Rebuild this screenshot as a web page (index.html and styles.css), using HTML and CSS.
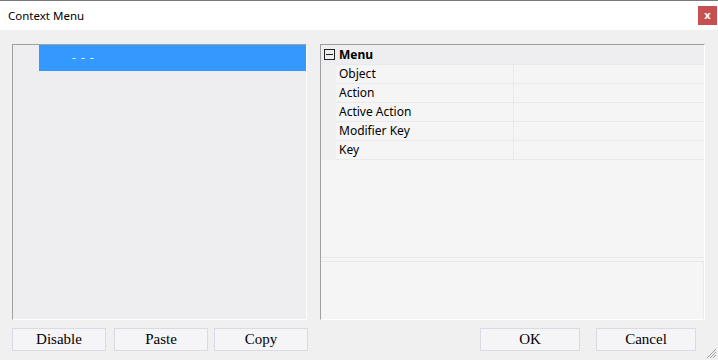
FILE: index.html
```html
<!DOCTYPE html>
<html lang="en">
<head>
  <meta charset="UTF-8">
  <meta name="viewport" content="width=device-width, initial-scale=1.0">
  <title>Context Menu</title>
  <link rel="stylesheet" href="styles.css">
</head>
<body>
  <div class="window">
    <div class="titlebar">
      <span class="title">Context Menu</span>
      <span class="close">x</span>
    </div>

    <div class="content">
      <div class="panels">
        <div class="tree">
          <div class="tree-row selected">- - -</div>
        </div>

        <div class="props">
          <div class="grid">
            <div class="category">
              <span class="toggle"></span>
              <span class="category-name">Menu</span>
            </div>
            <div class="rows">
              <div class="prop-row"><span class="prop-name">Object</span><span class="prop-value"></span></div>
              <div class="prop-row"><span class="prop-name">Action</span><span class="prop-value"></span></div>
              <div class="prop-row"><span class="prop-name">Active Action</span><span class="prop-value"></span></div>
              <div class="prop-row"><span class="prop-name">Modifier Key</span><span class="prop-value"></span></div>
              <div class="prop-row"><span class="prop-name">Key</span><span class="prop-value"></span></div>
            </div>
          </div>
          <div class="description"></div>
        </div>
      </div>

      <div class="buttons">
        <div class="button-group">
          <button class="btn">Disable</button>
          <button class="btn">Paste</button>
          <button class="btn copy">Copy</button>
        </div>
        <div class="button-group right">
          <button class="btn wide">OK</button>
          <button class="btn wide cancel">Cancel</button>
        </div>
      </div>
    </div>

    <svg class="grip" width="12" height="12" viewBox="0 0 12 12">
      <path d="M11 2 L2 11 M11 5 L5 11 M11 8 L8 11" stroke="#a0a0a0" stroke-width="1" fill="none"/>
    </svg>
  </div>
</body>
</html>
```

FILE: styles.css
```css
* {
  box-sizing: border-box;
}

body {
  margin: 0;
  font-family: "Segoe UI", "Noto Sans", sans-serif;
  font-size: 12px;
  color: #000;
}

.window {
  position: relative;
  width: 718px;
  height: 360px;
  background: #f0f0f0;
  border-top: 1px solid #7a7a7a;
}

.titlebar {
  height: 29px;
  background: #fff;
  display: flex;
  align-items: center;
  justify-content: space-between;
  padding-left: 8px;
  padding-right: 1px;
}

.title {
  font-size: 11.5px;
  margin-top: -1px;
}

.close {
  width: 19px;
  height: 19px;
  margin-top: -1px;
  background: #c75050;
  color: #fff;
  font-weight: bold;
  font-size: 11px;
  line-height: 17px;
  text-align: center;
}

.content {
  padding: 14px 13px 0 12px;
}

.panels {
  display: flex;
  gap: 13px;
  height: 276px;
}

.tree {
  width: 295px;
  background: #eeeef0;
  border-top: 1px solid #a0a0a0;
  border-left: 1px solid #a0a0a0;
  border-right: 1px solid #fff;
  border-bottom: 1px solid #fff;
}

.tree-row {
  height: 26px;
  margin-left: 26px;
  padding-left: 33px;
  line-height: 26px;
  color: #fff;
  font-size: 12px;
  letter-spacing: 1px;
}

.tree-row.selected {
  background: #3399ff;
}

.props {
  flex: 1;
  display: flex;
  flex-direction: column;
  background: #f5f5f5;
  border-top: 1px solid #a0a0a0;
  border-left: 1px solid #a0a0a0;
  border-right: 1px solid #fff;
  border-bottom: 1px solid #fff;
}

.grid {
  height: 213px;
  border-bottom: 1px solid #e9e9e9;
}

.category {
  height: 19px;
  display: flex;
  align-items: center;
  background: #eeeef0;
}

.toggle {
  position: relative;
  width: 11px;
  height: 11px;
  margin-left: 3px;
  border: 1px solid #222;
}

.toggle::after {
  content: "";
  position: absolute;
  left: 1px;
  top: 4px;
  width: 7px;
  height: 1px;
  background: #222;
}

.category-name {
  margin-left: 4px;
  font-weight: bold;
}

.rows {
  background: linear-gradient(to right, #f0f0f0 15px, #f5f5f5 15px);
}

.prop-row {
  display: flex;
  height: 19px;
  margin-left: 15px;
  border-top: 1px solid #e9e9e9;
}

.prop-row:last-child {
  height: 20px;
  border-bottom: 1px solid #e9e9e9;
}

.prop-name {
  width: 178px;
  padding-left: 3px;
  line-height: 18px;
  border-right: 1px solid #e9e9e9;
}

.prop-value {
  flex: 1;
}

.description {
  flex: 1;
  margin-top: 3px;
  border-top: 1px solid #e9e9e9;
  border-right: 1px solid #e9e9e9;
}

.buttons {
  display: flex;
  justify-content: space-between;
  margin-top: 8px;
  padding-right: 9px;
}

.button-group {
  display: flex;
  gap: 8px;
}

.button-group.right {
  gap: 16px;
}

.btn {
  width: 94px;
  height: 23px;
  padding: 0;
  background: #f5f5f7;
  border: 1px solid #dadae4;
  font-family: "Liberation Serif", serif;
  font-size: 15px;
  color: #000;
}

.btn.copy {
  margin-left: -2px;
}

.btn.wide {
  width: 100px;
}

.grip {
  position: absolute;
  right: 1px;
  bottom: 1px;
}
```
